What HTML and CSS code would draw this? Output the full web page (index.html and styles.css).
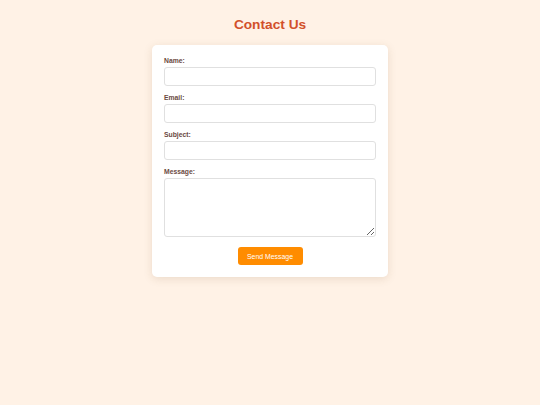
FILE: index.html
```html
<!DOCTYPE html>
<html>
<head>
<meta charset="utf-8">
<link rel="stylesheet" href="styles.css">
</head>
<body>
<h1 class="title">Contact Us</h1>
<form class="card">
  <div class="group">
    <label class="label">Name:</label>
    <input class="field" type="text">
  </div>
  <div class="group">
    <label class="label">Email:</label>
    <input class="field" type="text">
  </div>
  <div class="group">
    <label class="label">Subject:</label>
    <input class="field" type="text">
  </div>
  <div class="group">
    <label class="label">Message:</label>
    <textarea class="field area"></textarea>
  </div>
  <div class="actions">
    <button class="btn" type="button">Send Message</button>
  </div>
</form>
</body>
</html>
```
FILE: styles.css
```css
html, body {
  margin: 0;
  padding: 0;
}
body {
  background: #fff2e6;
  font-family: "Liberation Sans", Arial, sans-serif;
  height: 405px;
  overflow: hidden;
}
.title {
  margin: 0 0 12px;
  padding-top: 17px;
  line-height: 16px;
  font-size: 13.7px;
  font-weight: bold;
  color: #d2502a;
  text-align: center;
}
.card {
  width: 236px;
  margin: 0 auto;
  background: #fff;
  border-radius: 5px;
  box-shadow: 0 2px 8px rgba(120, 80, 40, 0.15);
  padding: 12px;
  box-sizing: border-box;
  display: flex;
  flex-direction: column;
}
.group {
  display: flex;
  flex-direction: column;
  margin-bottom: 8px;
}
.label {
  font-size: 6.8px;
  line-height: 8px;
  font-weight: bold;
  color: #6b4a3f;
  margin-bottom: 2px;
}
.field {
  height: 19px;
  border: 1px solid #e0e0e0;
  border-radius: 3px;
  box-sizing: border-box;
  margin: 0;
  padding: 0 4px;
  background: #fff;
  font-family: inherit;
  font-size: 7px;
}
.area {
  height: 59px;
  resize: vertical;
}
.actions {
  display: flex;
  justify-content: center;
  margin-top: 2px;
}
.btn {
  width: 65px;
  height: 18px;
  border: none;
  border-radius: 3px;
  background: #ff8c00;
  color: #fff;
  font-family: inherit;
  font-size: 6.9px;
  padding: 0;
}
```
